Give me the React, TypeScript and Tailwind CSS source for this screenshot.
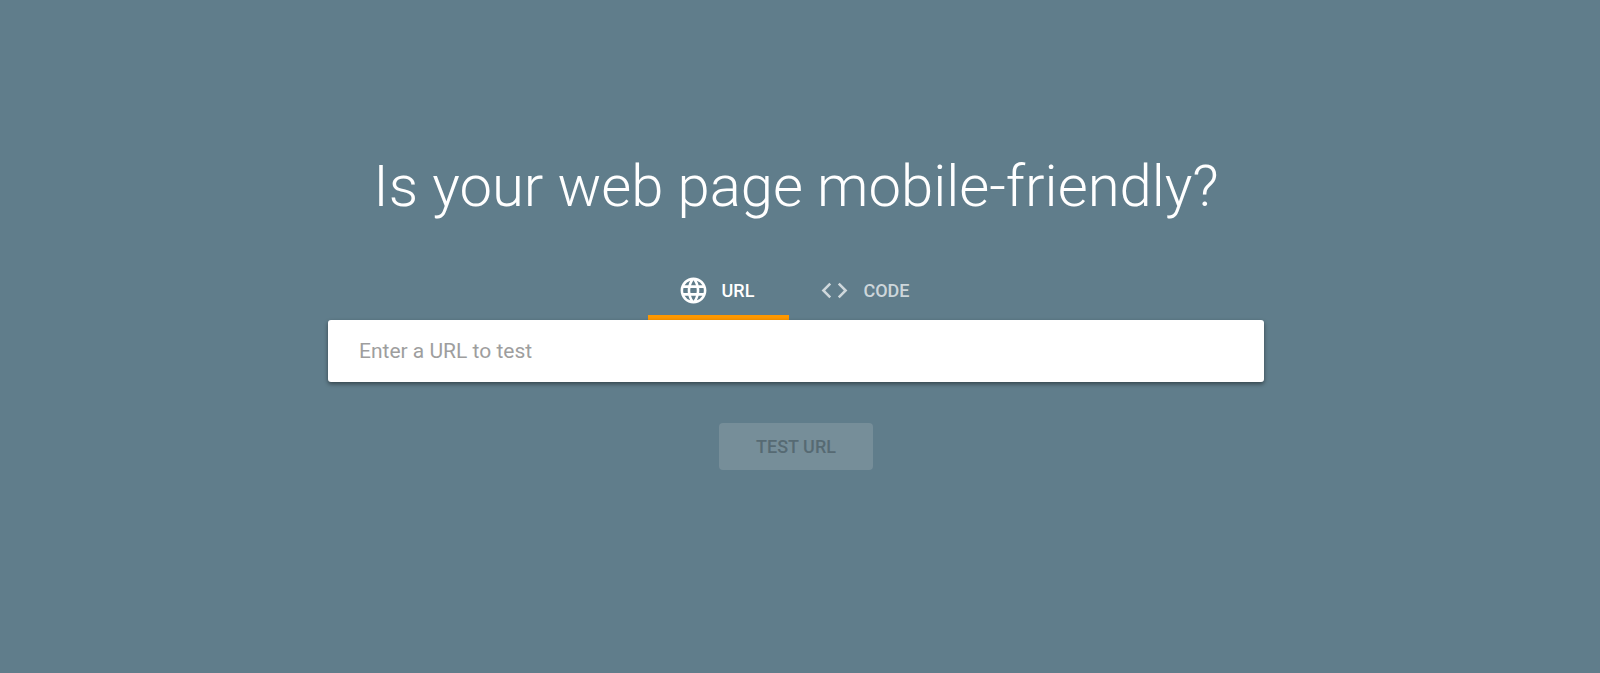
import React, { useState } from "react";
import { MdLanguage, MdCode } from "react-icons/md";

type Mode = "url" | "code";

const tabs = [
  { id: "url" as Mode, label: "URL", Icon: MdLanguage },
  { id: "code" as Mode, label: "CODE", Icon: MdCode },
];

export default function App() {
  const [mode, setMode] = useState<Mode>("url");
  const [value, setValue] = useState("");

  return (
    <main className="flex min-h-screen flex-col items-center bg-[#607d8b] pt-[150px] pr-10 pl-8 font-['Roboto',sans-serif]">
      <h1 className="text-center text-[58px] leading-[72px] font-light text-white">
        Is your web page mobile-friendly?
      </h1>
      <div role="tablist" className="mt-9 flex">
        {tabs.map(({ id, label, Icon }) => (
          <button
            key={id}
            type="button"
            role="tab"
            aria-selected={mode === id}
            onClick={() => setMode(id)}
            className={`flex h-[62px] items-center gap-[13px] border-b-[5px] pt-[7px] pr-[35px] pl-[30px] text-[18px] font-medium ${
              mode === id ? "border-[#ff9800] text-white" : "border-transparent text-white/70"
            }`}
          >
            <Icon className="size-[31px]" />
            {label}
          </button>
        ))}
      </div>
      <input
        type="text"
        aria-label="Enter a URL to test"
        placeholder="Enter a URL to test"
        value={value}
        onChange={(e) => setValue(e.target.value)}
        className="h-[62px] w-full max-w-[936px] rounded-[3px] bg-white px-[31px] text-[21px] text-gray-800 shadow-[0_2px_4px_rgba(0,0,0,0.45)] outline-none placeholder:text-[#9e9e9e]"
      />
      <button
        type="button"
        disabled={!value}
        className="mt-[41px] h-[47px] min-w-[154px] rounded-[4px] bg-[#768e99] px-8 text-[18px] font-medium text-[#566a73]"
      >
        TEST URL
      </button>
    </main>
  );
}
